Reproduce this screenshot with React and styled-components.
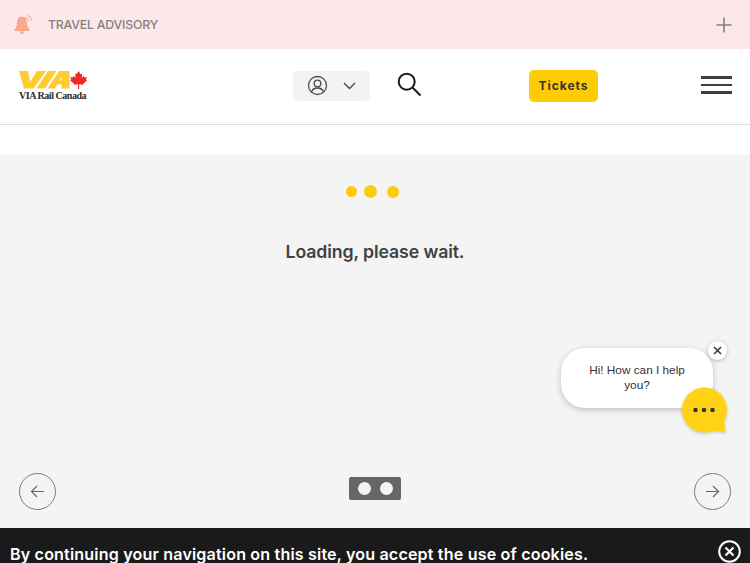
import React from "react";
import styled, { createGlobalStyle } from "styled-components";

const Global = createGlobalStyle`
  html, body { margin: 0; padding: 0; height: 563px; overflow: hidden; background: #fff; }
  body { font-family: "Inter", "Liberation Sans", sans-serif; }
  * { box-sizing: border-box; }
`;

const Page = styled.div`
  width: 750px;
  height: 563px;
  display: flex;
  flex-direction: column;
  overflow: hidden;
`;

const Advisory = styled.div`
  height: 49px;
  flex: none;
  background: #fce8e9;
  display: flex;
  align-items: center;
  padding: 0 18px 0 14px;
`;

const AdvisoryLabel = styled.span`
  margin-left: 14px;
  font-family: "Inter", sans-serif;
  font-size: 12.3px;
  font-weight: 500;
  letter-spacing: -0.2px;
  color: #84807f;
  flex: 1;
`;

const Header = styled.header`
  height: 76px;
  flex: none;
  background: #fff;
  border-bottom: 1px solid #dedede;
  display: grid;
  grid-template-columns: 275px 77px 28px 1fr auto;
  align-items: center;
  padding: 0 18px 0 18px;
`;

const Logo = styled.div`
  display: flex;
  flex-direction: column;
  align-items: flex-start;
  margin-top: -2px;
`;

const LogoText = styled.span`
  font-family: "Liberation Serif", serif;
  font-size: 10px;
  font-weight: 700;
  line-height: 10px;
  letter-spacing: -0.45px;
  color: #2a2a2a;
  margin-top: 1px;
  margin-left: 1px;
`;

const AccountButton = styled.div`
  width: 77px;
  height: 30px;
  margin-top: -2px;
  border-radius: 5px;
  background: #f3f3f3;
  display: flex;
  align-items: center;
  gap: 15px;
  padding: 0 14px;
`;

const SearchButton = styled.div`
  display: flex;
  width: 25px;
  margin-left: 27px;
  margin-top: -4px;
  flex: none;
`;

const TicketsCell = styled.div`
  display: flex;
  margin-left: 131px;
`;

const Tickets = styled.div`
  width: 69px;
  height: 32px;
  margin-top: -2px;
  border-radius: 5px;
  background: #ffcb05;
  color: #333;
  font-size: 12px;
  font-weight: 700;
  letter-spacing: 1px;
  display: flex;
  align-items: center;
  justify-content: center;
`;

const Burger = styled.div`
  width: 31px;
  display: flex;
  flex-direction: column;
  gap: 5px;
  margin-top: -3px;
`;

const BurgerLine = styled.span`
  display: block;
  height: 2.5px;
  background: #3e3e3e;
`;

const Spacer = styled.div`
  height: 30px;
  flex: none;
  background: #fff;
`;

const Main = styled.main`
  position: relative;
  flex: 1;
  background: #f4f4f4;
  display: flex;
  flex-direction: column;
  align-items: center;
  padding-top: 30px;
`;

const Loader = styled.div`
  display: flex;
  align-items: center;
  height: 13px;
  margin-right: 5px;
`;

const Dot = styled.span`
  width: ${(p) => p.$size}px;
  height: ${(p) => p.$size}px;
  margin-right: ${(p) => p.$gap}px;
  border-radius: 50%;
  background: #ffcb05;
`;

const Loading = styled.div`
  margin-top: 42px;
  font-size: 17.7px;
  line-height: 24px;
  font-weight: 600;
  color: #414042;
  letter-spacing: -0.1px;
`;

const ArrowButton = styled.div`
  position: absolute;
  top: 318px;
  ${(p) => (p.$side === "left" ? "left: 19px;" : "right: 19px;")}
  width: 37px;
  height: 37px;
  border-radius: 50%;
  border: 1px solid #7a7a7a;
  display: flex;
  align-items: center;
  justify-content: center;
`;

const Pager = styled.div`
  position: absolute;
  top: 322px;
  left: 349px;
  width: 52px;
  height: 23px;
  border-radius: 2px;
  background: #666;
  display: flex;
  align-items: center;
  justify-content: center;
  gap: 9px;
`;

const PagerDot = styled.span`
  width: 13px;
  height: 13px;
  border-radius: 50%;
  background: #f4f4f4;
`;

const Bubble = styled.div`
  position: absolute;
  left: 561px;
  top: 193px;
  width: 152px;
  height: 60px;
  border-radius: 24px;
  background: #fff;
  box-shadow: 0 2px 6px rgba(0, 0, 0, 0.22);
  padding: 15px 20px 0 20px;
  text-align: center;
  font-family: "Liberation Sans", sans-serif;
  font-size: 11.8px;
  line-height: 15px;
  color: #333;
`;

const BubbleClose = styled.div`
  position: absolute;
  left: 708px;
  top: 186px;
  width: 19px;
  height: 19px;
  border-radius: 50%;
  background: #fff;
  box-shadow: 0 1px 4px rgba(0, 0, 0, 0.25);
  display: flex;
  align-items: center;
  justify-content: center;
`;

const ChatIcon = styled.div`
  position: absolute;
  left: 680px;
  top: 231px;
  display: flex;
`;

const Cookie = styled.footer`
  height: 35px;
  flex: none;
  background: #1a1a1a;
  display: flex;
  align-items: flex-start;
  justify-content: space-between;
  padding: 15px 9px 0 10px;
  overflow: visible;
`;

const CookieText = styled.span`
  color: #fff;
  font-size: 16.1px;
  line-height: 22px;
  font-weight: 600;
  letter-spacing: 0.16px;
  white-space: nowrap;
`;

const CookieClose = styled.div`
  display: flex;
  margin-top: -3px;
`;

const BellIcon = () => (
  <svg width="20" height="20" viewBox="0 0 20 20" fill="none" style={{ flex: "none" }}>
    <path d="M8 1.500c3.500 0 5 2.800 5 6.500 0 3 1 5 2.500 6.500V16H.5v-1.500C2 13 3 11 3 8c0-3.700 1.500-6.500 5-6.500z" fill="#fda78a" />
    <path d="M6 16.500h4c0 1.500-1 2.500-2 2.500s-2-1-2-2.500z" fill="#fda78a" />
    <path d="M12.500 2.500c1.200.8 2 1.900 2.300 3.300M14.500.5c1.800 1.100 3 2.800 3.500 5" stroke="#f5b7a4" strokeWidth="1.300" strokeLinecap="round" />
  </svg>
);

const PlusIcon = () => (
  <svg width="16" height="16" viewBox="0 0 16 16" fill="none">
    <path d="M8 .5v15M.5 8h15" stroke="#7c8186" strokeWidth="1.600" />
  </svg>
);

const ViaLogo = () => (
  <svg width="70" height="20" viewBox="0 0 70 20" style={{ display: "block" }}>
    <path d="M1 1H10L12 12L19 1H28L15.500 18.500H6Z" fill="#ffcb2e" />
    <path d="M30 1H38.500L27 18.500H18.500Z" fill="#ffcb2e" />
    <path d="M41 1H51.500V18.500H43.500V14.500H39.500L37 18.500H29.500ZM43.500 6.500L41.500 10.500H43.500Z" fill="#ffcb2e" fillRule="evenodd" />
    <path d="M60.500 1l2.100 3.300 1.700-.8-.6 4.300 2.200-1.900.5 1.600 2.600-.4-.9 2.700 1 .6-3.600 3-.1 1.300-4.200-.5v4.800h-1.100v-4.800l-4.200.5-.1-1.300-3.600-3 1-.6-.9-2.700 2.600.4.500-1.600 2.200 1.900-.6-4.300 1.700.8z" fill="#ee2a24" />
  </svg>
);

const UserIcon = () => (
  <svg width="21" height="21" viewBox="0 0 21 21" fill="none" stroke="#4a4a4a" strokeWidth="1.300" style={{ flex: "none" }}>
    <circle cx="10.500" cy="10.500" r="9" />
    <circle cx="10.500" cy="8.500" r="3.300" />
    <path d="M4.500 17c.8-2.600 2.800-4 6-4s5.200 1.400 6 4" />
  </svg>
);

const ChevronIcon = () => (
  <svg width="13" height="8" viewBox="0 0 13 8" fill="none" style={{ flex: "none" }}>
    <path d="M1 1l5.500 5.500L12 1" stroke="#444" strokeWidth="1.300" />
  </svg>
);

const SearchIcon = () => (
  <svg width="25" height="25" viewBox="0 0 25 25" fill="none" stroke="#1c1c1c" style={{ flex: "none" }}>
    <circle cx="9.700" cy="9.700" r="8" strokeWidth="2" />
    <path d="M15.500 15.500l8 8" strokeWidth="2" />
  </svg>
);

const ArrowIcon = ({ flip }) => (
  <svg width="15" height="13" viewBox="0 0 15 13" fill="none" style={flip ? { transform: "scaleX(-1)" } : undefined}>
    <path d="M14 6.500H1.500M7 1L1.500 6.500 7 12" stroke="#666" strokeWidth="1.200" />
  </svg>
);

const SmallX = () => (
  <svg width="9" height="9" viewBox="0 0 9 9" fill="none">
    <path d="M1 1l7 7M8 1L1 8" stroke="#3a3a3a" strokeWidth="1.600" />
  </svg>
);

const ChatBubbleIcon = () => (
  <svg width="50" height="50" viewBox="0 0 50 50">
    <defs>
      <filter id="cs" x="-20%" y="-20%" width="140%" height="140%">
        <feDropShadow dx="0" dy="1" stdDeviation="1.500" floodOpacity="0.25" />
      </filter>
    </defs>
    <g filter="url(#cs)">
      <circle cx="24.500" cy="24" r="22.500" fill="#ffd216" />
      <path d="M44 33L45.500 46L33 44.500Z" fill="#ffd216" />
    </g>
    <circle cx="15.500" cy="24" r="2.300" fill="#333" />
    <circle cx="24" cy="24" r="2.300" fill="#333" />
    <circle cx="32.500" cy="24" r="2.300" fill="#333" />
  </svg>
);

const CircleX = () => (
  <svg width="23" height="23" viewBox="0 0 23 23" fill="none" stroke="#fff">
    <circle cx="11.500" cy="11.500" r="10.300" strokeWidth="2" />
    <path d="M7.500 7.500l8 8M15.500 7.500l-8 8" strokeWidth="2.200" />
  </svg>
);

export default function App() {
  return (
    <>
      <Global />
      <Page>
        <Advisory>
          <BellIcon />
          <AdvisoryLabel>TRAVEL ADVISORY</AdvisoryLabel>
          <PlusIcon />
        </Advisory>
        <Header>
          <Logo>
            <ViaLogo />
            <LogoText>VIA Rail Canada</LogoText>
          </Logo>
          <AccountButton>
            <UserIcon />
            <ChevronIcon />
          </AccountButton>
          <SearchButton>
            <SearchIcon />
          </SearchButton>
          <TicketsCell>
            <Tickets>Tickets</Tickets>
          </TicketsCell>
          <Burger>
            <BurgerLine />
            <BurgerLine />
            <BurgerLine />
          </Burger>
        </Header>
        <Spacer />
        <Main>
          <Loader>
            <Dot $size={11} $gap={7} />
            <Dot $size={13} $gap={10} />
            <Dot $size={12} $gap={0} />
          </Loader>
          <Loading>Loading, please wait.</Loading>
          <ArrowButton $side="left">
            <ArrowIcon />
          </ArrowButton>
          <Pager>
            <PagerDot />
            <PagerDot />
          </Pager>
          <ArrowButton $side="right">
            <ArrowIcon flip />
          </ArrowButton>
          <Bubble>Hi! How can I help you?</Bubble>
          <BubbleClose>
            <SmallX />
          </BubbleClose>
          <ChatIcon>
            <ChatBubbleIcon />
          </ChatIcon>
        </Main>
        <Cookie>
          <CookieText>By continuing your navigation on this site, you accept the use of cookies.</CookieText>
          <CookieClose>
            <CircleX />
          </CookieClose>
        </Cookie>
      </Page>
    </>
  );
}
